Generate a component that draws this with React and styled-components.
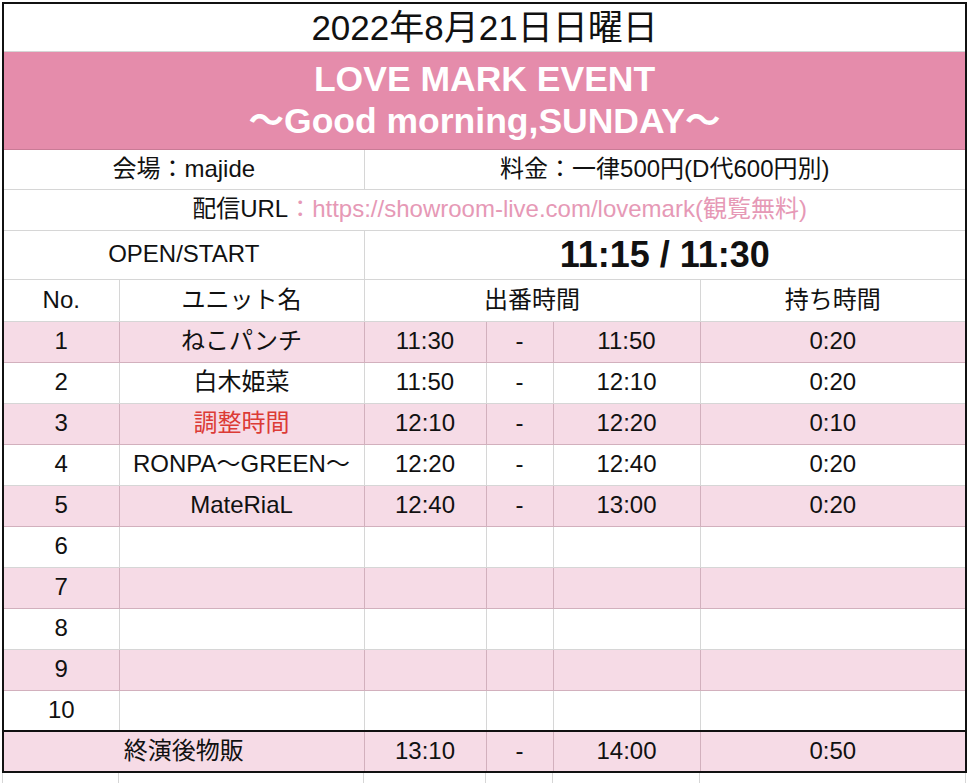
import styled, { createGlobalStyle } from "styled-components";

const GlobalStyle = createGlobalStyle`
  html, body {
    margin: 0;
    padding: 0;
    background: #ffffff;
  }
  body {
    font-family: "Liberation Sans", "Noto Sans CJK JP", sans-serif;
    color: #111;
  }
`;

const Page = styled.div`
  width: 975px;
  height: 783px;
  overflow: hidden;
  padding: 2px 0 0 2px;
  box-sizing: border-box;
`;

const Sheet = styled.table`
  width: 963px;
  border-collapse: collapse;
  table-layout: fixed;
  border: 2px solid #111;
`;

const Spill = styled.table`
  width: 963px;
  border-collapse: collapse;
  table-layout: fixed;
  td {
    height: 12px;
    border-left: 1px solid #d6d6d6;
    border-right: 1px solid #d6d6d6;
  }
`;

const Row = styled.tr`
  height: ${(p) => p.$h || 41}px;
  background: ${(p) => (p.$pink ? "#f6dbe6" : "#ffffff")};
  & > td {
    border: 1px solid ${(p) => (p.$pink ? "#d2b0bd" : "#d6d6d6")};
  }
`;

const Cell = styled.td`
  padding: 0;
  text-align: center;
  vertical-align: middle;
  font-size: 24px;
  line-height: 1.1;
  white-space: nowrap;
  color: ${(p) => p.$color || "#111"};
`;

const DateCell = styled(Cell)`
  font-size: 35px;
  line-height: 1;
`;

const TitleCell = styled(Cell)`
  background: #e58cab;
  color: #ffffff;
  font-weight: 700;
  font-size: 35.5px;
  line-height: 42px;
  && {
    border-top: 1px solid #c97b96;
    border-bottom: 1px solid #c97b96;
  }
`;

const UrlCell = styled(Cell)`
  padding-left: 30px;
`;

const BigTime = styled(Cell)`
  font-weight: 700;
  font-size: 36px;
  line-height: 1;
`;

const Link = styled.span`
  color: #e699b6;
`;

const FinalRow = styled(Row)`
  & > td {
    border-top: 2px solid #111;
  }
`;

const cols = [116, 245, 122, 67, 147, 266];

const Cols = () => (
  <colgroup>
    {cols.map((w, i) => (
      <col key={i} style={{ width: w }} />
    ))}
  </colgroup>
);

const acts = [
  { no: 1, name: "ねこパンチ", from: "11:30", to: "11:50", len: "0:20" },
  { no: 2, name: "白木姫菜", from: "11:50", to: "12:10", len: "0:20" },
  { no: 3, name: "調整時間", from: "12:10", to: "12:20", len: "0:10", red: true },
  { no: 4, name: "RONPA〜GREEN〜", from: "12:20", to: "12:40", len: "0:20" },
  { no: 5, name: "MateRiaL", from: "12:40", to: "13:00", len: "0:20" },
  { no: 6 },
  { no: 7 },
  { no: 8 },
  { no: 9 },
  { no: 10 },
];

export default function App() {
  return (
    <>
      <GlobalStyle />
      <Page>
        <Sheet>
          <Cols />
          <tbody>
            <Row $h={48}>
              <DateCell colSpan={6}>2022年8月21日日曜日</DateCell>
            </Row>
            <Row $h={98}>
              <TitleCell colSpan={6}>
                LOVE MARK EVENT
                <br />
                〜Good morning,SUNDAY〜
              </TitleCell>
            </Row>
            <Row $h={40}>
              <Cell colSpan={2}>会場：majide</Cell>
              <Cell colSpan={4}>料金：一律500円(D代600円別)</Cell>
            </Row>
            <Row $h={41}>
              <UrlCell colSpan={6}>
                配信URL<Link>：https://showroom-live.com/lovemark(観覧無料)</Link>
              </UrlCell>
            </Row>
            <Row $h={49}>
              <Cell colSpan={2}>OPEN/START</Cell>
              <BigTime colSpan={4}>11:15 / 11:30</BigTime>
            </Row>
            <Row $h={42}>
              <Cell>No.</Cell>
              <Cell>ユニット名</Cell>
              <Cell colSpan={3}>出番時間</Cell>
              <Cell>持ち時間</Cell>
            </Row>
            {acts.map((a) => (
              <Row key={a.no} $pink={a.no % 2 === 1}>
                <Cell>{a.no}</Cell>
                <Cell $color={a.red ? "#dc3b36" : undefined}>{a.name}</Cell>
                <Cell>{a.from}</Cell>
                <Cell>{a.from ? "-" : ""}</Cell>
                <Cell>{a.to}</Cell>
                <Cell>{a.len}</Cell>
              </Row>
            ))}
            <FinalRow $pink>
              <Cell colSpan={2}>終演後物販</Cell>
              <Cell>13:10</Cell>
              <Cell>-</Cell>
              <Cell>14:00</Cell>
              <Cell>0:50</Cell>
            </FinalRow>
          </tbody>
        </Sheet>
        <Spill>
          <Cols />
          <tbody>
            <tr>
              {cols.map((w, i) => (
                <td key={i} />
              ))}
            </tr>
          </tbody>
        </Spill>
      </Page>
    </>
  );
}
